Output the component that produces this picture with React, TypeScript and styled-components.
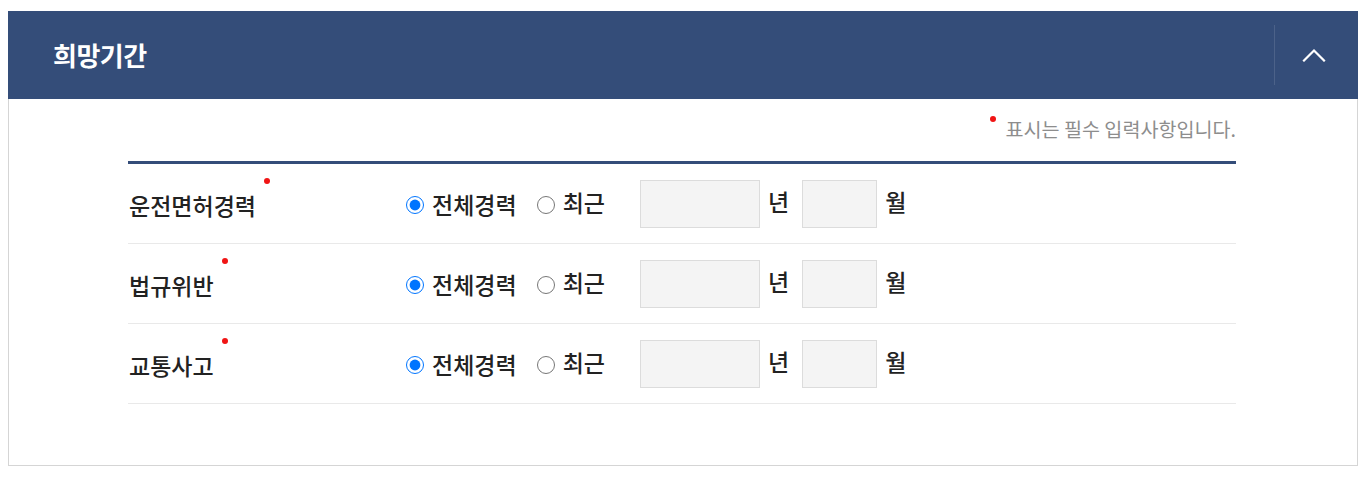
import React from 'react';
import styled, { createGlobalStyle } from 'styled-components';

const GlobalStyle = createGlobalStyle`
  body {
    margin: 8px;
    padding-top: 3px;
    background: #fff;
    font-family: "Noto Sans CJK KR", "Noto Sans", sans-serif;
    color: #222;
  }
  * { box-sizing: border-box; }
`;

const Panel = styled.section`
  width: 1350px;
`;

const Header = styled.header`
  height: 88px;
  background: #344d79;
  display: flex;
  align-items: center;
  justify-content: space-between;
`;

const Title = styled.h2`
  margin: 0;
  padding-left: 45px;
  color: #fff;
  font-size: 26px;
  font-weight: 700;
  letter-spacing: -0.5px;
  line-height: 30px;
`;

const Toggle = styled.button`
  width: 78px;
  height: 60px;
  margin-right: 6px;
  padding: 0;
  border: none;
  border-left: 1px solid rgba(255, 255, 255, 0.12);
  background: transparent;
  display: flex;
  align-items: center;
  justify-content: center;
  cursor: pointer;
`;

const Body = styled.div`
  border: 1px solid #d5d5d5;
  border-top: none;
  padding: 18px 121px 61px 119px;
`;

const Note = styled.p`
  margin: 0 0 20px;
  text-align: right;
  font-size: 19.6px;
  line-height: 24px;
  color: #8d8d8d;
`;

const Dot = styled.span`
  display: inline-block;
  width: 6px;
  height: 6px;
  border-radius: 50%;
  background: #f01414;
  vertical-align: top;
  margin: 0 9px 0 0;
  position: relative;
  top: -1px;
`;

const Table = styled.div`
  border-top: 3px solid #344d79;
`;

const Row = styled.div`
  display: grid;
  grid-template-columns: 278px 1fr;
  align-items: center;
  height: 80px;
  border-bottom: 1px solid #e9e9e9;
`;

const Label = styled.span`
  justify-self: start;
  position: relative;
  margin-left: 1px;
  padding-top: 3px;
  font-size: 23px;
  font-weight: 500;
  line-height: 30px;
  color: #222;
  &::after {
    content: "";
    position: absolute;
    right: -14px;
    top: -9px;
    width: 6px;
    height: 6px;
    border-radius: 50%;
    background: #f01414;
  }
`;

const Field = styled.div`
  display: flex;
  align-items: center;
  font-size: 23px;
  font-weight: 500;
  line-height: 30px;
  color: #222;
`;

const Choice = styled.label<{ $gap?: number }>`
  display: inline-flex;
  align-items: center;
  gap: 8px;
  margin-right: ${(p) => p.$gap ?? 0}px;
  cursor: pointer;
`;

const Radio = styled.input`
  width: 18px;
  height: 18px;
  margin: 3px 0 0;
  accent-color: #0075ff;
`;

const ChoiceText = styled.span<{ $up?: boolean }>`
  position: relative;
  top: ${(p) => (p.$up ? -2 : 0)}px;
`;

const Box = styled.input<{ $w: number }>`
  width: ${(p) => p.$w}px;
  height: 48px;
  margin: 0;
  border: 1px solid #dcdcdc;
  background: #f4f4f4;
  font-size: 18px;
  padding: 0 8px;
  font-family: inherit;
`;

const Unit = styled.span<{ $gap?: number }>`
  margin: 0 ${(p) => p.$gap ?? 0}px 0 8px;
  position: relative;
  top: -3px;
`;

const Chevron = () => (
  <svg width="24" height="14" viewBox="0 0 24 14" fill="none">
    <polyline points="2,12.5 12,2.5 22,12.5" stroke="#fff" strokeWidth="2.2" strokeLinecap="square" />
  </svg>
);

const rows = ['운전면허경력', '법규위반', '교통사고'];

export default function App() {
  return (
    <>
      <GlobalStyle />
      <Panel>
        <Header>
          <Title>희망기간</Title>
          <Toggle aria-label="접기">
            <Chevron />
          </Toggle>
        </Header>
        <Body>
          <Note>
            <Dot />
            표시는 필수 입력사항입니다.
          </Note>
          <Table>
            {rows.map((name, i) => (
              <Row key={name}>
                <Label>{name}</Label>
                <Field>
                  <Choice $gap={20}>
                    <Radio type="radio" name={`r${i}`} defaultChecked />
                    <ChoiceText>전체경력</ChoiceText>
                  </Choice>
                  <Choice $gap={35}>
                    <Radio type="radio" name={`r${i}`} />
                    <ChoiceText $up>최근</ChoiceText>
                  </Choice>
                  <Box $w={120} type="text" />
                  <Unit $gap={13}>년</Unit>
                  <Box $w={75} type="text" />
                  <Unit>월</Unit>
                </Field>
              </Row>
            ))}
          </Table>
        </Body>
      </Panel>
    </>
  );
}
